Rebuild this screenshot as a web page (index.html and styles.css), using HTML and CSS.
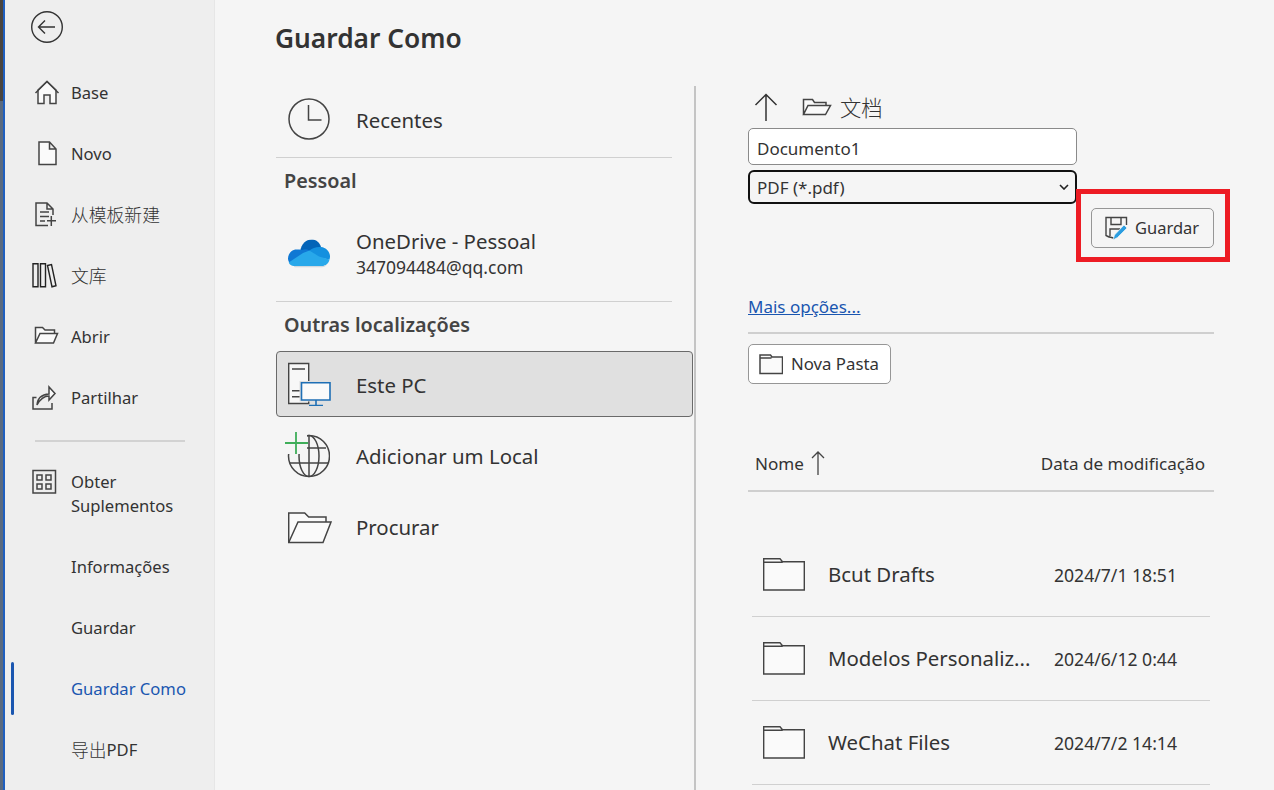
FILE: index.html
```html
<!DOCTYPE html>
<html lang="pt">
<head>
<meta charset="utf-8">
<title>Guardar Como</title>
<link rel="stylesheet" href="styles.css">
</head>
<body>
<div class="app">
  <aside class="sidebar">
    <div class="back">
      <svg width="34" height="34" viewBox="0 0 34 34" fill="none" stroke="#333" stroke-width="1.4"><circle cx="17" cy="17" r="15.3"/><path d="M8.5 17H25M15 10.5 8.5 17l6.500 6.500"/></svg>
    </div>
    <nav class="nav">
      <a class="item"><span class="ico"><svg width="30" height="26" viewBox="0 0 30 26" fill="#fafafa" stroke="#444" stroke-width="1.5"><path d="M6 23.500V10L15 1.500 24 10v13.500h-6V15h-6v8.500z"/><path d="M3.500 13 15 1.500 26.500 13" fill="none"/></svg></span>Base</a>
      <a class="item"><span class="ico"><svg width="30" height="26" viewBox="0 0 30 26" fill="#fafafa" stroke="#444" stroke-width="1.5"><path d="M7 1h10.500L24 8v15.500H7zM17.500 1v7H24"/></svg></span>Novo</a>
      <a class="item"><span class="ico"><svg width="30" height="26" viewBox="0 0 30 26" fill="none" stroke="#444" stroke-width="1.5"><path d="M16 23.500H4V1h11l6 6v6M15 1v6h6M8 10h9M8 14.500h9M8 19h5M15 18.800h9M19.300 14v10"/></svg></span><span class="cjk">从模板新建</span></a>
      <a class="item"><span class="ico"><svg width="30" height="26" viewBox="0 0 30 26" fill="none" stroke="#222" stroke-width="1.400"><path d="M1 .8h5v23H1zM8.500.8h5v23h-5zM15.500 2.500l4-1 4.500 21.300-4 1z"/></svg></span><span class="cjk">文库</span></a>
      <a class="item"><span class="ico"><svg width="30" height="26" viewBox="0 0 30 26" fill="#fafafa" stroke="#444" stroke-width="1.5"><path d="M3.500 19V3.500h7l2.500 2.500h9.500v3.500M3.500 19 8 9.500h17.500L21.500 19z"/></svg></span>Abrir</a>
      <a class="item"><span class="ico"><svg width="30" height="26" viewBox="0 0 30 26" fill="none" stroke="#444" stroke-width="1.5"><path d="M4.500 12.500H1V24h19v-6"/><path d="M5 20c.5-6 4-10.500 12-11V2l6 6.500-6 6.500v-4c-5 0-8.500 2.500-12 9z" fill="#fafafa"/></svg></span>Partilhar</a>
      <div class="rule"></div>
      <a class="item item-tall"><span class="ico"><svg width="30" height="26" viewBox="0 0 30 26" fill="none" stroke="#444" stroke-width="1.5"><path d="M1 1.500h22.500v22.500H1zM5 6h5v5H5zM14 6h5v5h-5zM5 15h5v5H5zM14 15h5v5h-5z"/></svg></span><span class="two">Obter<br>Suplementos</span></a>
      <a class="item">Informações</a>
      <a class="item">Guardar</a>
      <a class="item current">Guardar Como</a>
      <a class="item"><span class="cjk">导出</span>PDF</a>
    </nav>
  </aside>

  <main class="main">
    <h1 class="title">Guardar Como</h1>
    <div class="columns">
      <section class="places">
        <div class="place first">
          <span class="pico"><svg width="42" height="42" viewBox="0 0 42 42" fill="none" stroke="#444" stroke-width="1.500"><circle cx="21" cy="21" r="20"/><path d="M20.500 7v15h13"/></svg></span>
          <span class="pname">Recentes</span>
        </div>
        <div class="heading head1">Pessoal</div>
        <div class="place cloud">
          <span class="pico"><svg width="42" height="29" viewBox="0 0 42 29"><path d="M12 12C13.500 4 18 0 23.500 0c4.500 0 8 2.500 9.500 7.500L26 19z" fill="#0364b8"/><path d="M14 10.500c2.500-1 5-.8 7.500.5L31 18l-13 8H6C2 25 0 22 0 19c0-5 4-9 8.500-9 2 0 3.800 0 5.500.5z" fill="#0f78d4"/><path d="M33 7.500C38 8 42 12 42 17c0 1-.2 2-.5 3L30 18l-8.500-7c3-2.500 7-4 11.500-3.500z" fill="#1490df"/><path d="M21.500 11 31 17l10.500 3c-.8 4-3.800 6.500-7.500 6.500H6C3.500 26.500 1.500 25 .7 23L15 13.500z" fill="#28a8ea"/><path d="M6 26.500h28c2 0 3.800-.7 5-1.800-1 2-3 3-5 3H7c-1 0-1-.6-1-1.200z" fill="#cfd8df"/></svg></span>
          <span class="ptext"><span class="pname">OneDrive - Pessoal</span><span class="pmail">347094484@qq.com</span></span>
        </div>
        <div class="heading head2">Outras localizações</div>
        <div class="place selected">
          <span class="pico"><svg width="44" height="44" viewBox="0 0 44 44" fill="none"><path d="M.7 1.500h20v40h-20z" fill="#f7f7f7" stroke="#444" stroke-width="1.400"/><path d="M4 7h13M4 28.700h8M4 34.700h8" stroke="#444" stroke-width="1.400"/><rect x="11.500" y="19" width="31" height="20.500" fill="#dedede"/><path d="M13.500 20.700H42V38H13.500z" fill="#fafafa" stroke="#1e6fb5" stroke-width="1.600"/><path d="M28 38v5.500M21 43.500h14" stroke="#1e6fb5" stroke-width="1.600"/></svg></span>
          <span class="pname">Este PC</span>
        </div>
        <div class="place lifted">
          <span class="pico"><svg class="globe" width="46" height="54" viewBox="0 0 46 54" fill="none"><circle cx="25" cy="25" r="20.500" stroke="#444" stroke-width="1.500"/><ellipse cx="25" cy="25" rx="10" ry="20.500" stroke="#444" stroke-width="1.500"/><path d="M8 17h34M6 32h38M25 4.500v41" stroke="#444" stroke-width="1.500"/><rect x="3" y="3" width="20" height="20" fill="#f5f5f5"/><path d="M12 1v22M1 12h23" stroke="#3fae5a" stroke-width="1.800"/></svg></span>
          <span class="pname">Adicionar um Local</span>
        </div>
        <div class="place lifted">
          <span class="pico"><svg width="46" height="35" viewBox="0 0 46 35" fill="#fafafa" stroke="#444" stroke-width="1.500"><path d="M.7 31V1.500h16l4 4H38v5"/><path d="M.7 31 10 10.500h33l-8 20.500z"/></svg></span>
          <span class="pname">Procurar</span>
        </div>
      </section>

      <section class="save">
        <div class="crumb">
          <svg width="24" height="28" viewBox="0 0 24 28" fill="none" stroke="#333" stroke-width="1.500"><path d="M12 1.500V28M1.500 12 12 1.500 22.500 12"/></svg>
          <svg class="crumb-folder" width="30" height="22" viewBox="0 0 30 22" fill="#fafafa" stroke="#444" stroke-width="1.500"><path d="M1.500 18.500v-15h9l2 3H24v3M1.500 18.500 6 9.500h22.500l-5 9z"/></svg>
          <span class="cjk-path">文档</span>
        </div>
        <div class="field">Documento1</div>
        <div class="dropdown">PDF (*.pdf)<svg width="10" height="6" viewBox="0 0 10 6" fill="none" stroke="#222" stroke-width="1.600"><path d="M1 1l4 4 4-4"/></svg></div>
        <div class="save-row">
          <button class="btn btn-save">
            <svg width="26" height="26" viewBox="0 0 26 26" fill="none"><path d="M11 23.500c-2-1.500-4-1-6-2l-2-1V2.500h20.500V10M8 2.500v7h10v-7M7 21v-7h10" stroke="#444" stroke-width="1.400"/><path d="M10 25l1.500-5L21 10l3 3-9.500 9.500z" fill="#2b9de0" stroke="#f5f5f5" stroke-width=".7"/></svg>
            <span class="btn-label">Guardar</span>
          </button>
          <div class="highlight"></div>
        </div>
        <a class="more">Mais opções...</a>
        <div class="hr"></div>
        <button class="btn btn-new">
          <svg width="24" height="22" viewBox="0 0 24 22" fill="#fafafa" stroke="#444" stroke-width="1.500"><path d="M1 20.500V2h10.500l1.500 2h10.500v16.500zM1 5h11.500"/></svg>
          <span class="btn-label">Nova Pasta</span>
        </button>
        <div class="thead">
          <span class="th-name">Nome <svg width="14" height="24" viewBox="0 0 14 24" fill="none" stroke="#444" stroke-width="1.300"><path d="M7 1v23M1 7l6-6 6 6"/></svg></span>
          <span class="th-date">Data de modificação</span>
        </div>
        <div class="tbody">
          <div class="row">
            <svg width="42" height="33" viewBox="0 0 42 33" fill="#fafafa" stroke="#444" stroke-width="1.400"><path d="M.7 32V.7H17l2.500 3H41.300V32zM.7 4.200h19"/></svg>
            <span class="fname">Bcut Drafts</span><span class="fdate">2024/7/1 18:51</span>
          </div>
          <div class="row">
            <svg width="42" height="33" viewBox="0 0 42 33" fill="#fafafa" stroke="#444" stroke-width="1.400"><path d="M.7 32V.7H17l2.500 3H41.300V32zM.7 4.200h19"/></svg>
            <span class="fname">Modelos Personaliz...</span><span class="fdate">2024/6/12 0:44</span>
          </div>
          <div class="row">
            <svg width="42" height="33" viewBox="0 0 42 33" fill="#fafafa" stroke="#444" stroke-width="1.400"><path d="M.7 32V.7H17l2.500 3H41.300V32zM.7 4.200h19"/></svg>
            <span class="fname">WeChat Files</span><span class="fdate">2024/7/2 14:14</span>
          </div>
        </div>
      </section>
    </div>
  </main>
</div>
</body>
</html>
```
FILE: styles.css
```css
* { box-sizing: border-box; }
html, body { margin: 0; height: 100%; overflow: hidden; }
body { font-family: "Noto Sans", "Noto Sans CJK SC", sans-serif; color: #333; background: #f5f5f5; }
.app { display: flex; width: 1274px; height: 790px; overflow: hidden; }
.sidebar { width: 215px; flex: none; background: #eeeeee; border-left: 5px solid #1f5fc0; border-right: 1px solid #e6e6e6; position: relative; }
.sidebar::before { content: ""; position: absolute; left: -5px; top: 0; bottom: 0; width: 3px; background: linear-gradient(#4a4540 0 101px, #5a6a80 101px); }
.back { height: 63px; padding: 10px 0 0 25px; }
.back svg { display: block; }
.nav { display: flex; flex-direction: column; }
.item { height: 61px; display: flex; align-items: center; padding: 0 0 2px 66px; font-size: 16.6px; color: #333; position: relative; white-space: nowrap; }
.ico { position: absolute; left: 27px; top: 17px; width: 30px; height: 26px; }
.ico svg { display: block; }
.cjk { font-size: 17.8px; line-height: 24px; margin-top: -2px; font-family: "Noto Sans CJK SC", sans-serif; font-weight: 300; }
.rule { height: 2px; margin: 11px 29px 0 30px; background: #d2d2d2; }
.item-tall { height: 95px; align-items: flex-start; }
.item-tall .ico { top: 27px; }
.two { line-height: 24px; margin-top: 28px; }
.current { color: #1a56b0; }
.current::before { content: ""; position: absolute; left: 6px; top: 3px; width: 3px; height: 53px; border-radius: 2px; background: #1a56b0; }

.main { flex: 1; padding: 0 0 0 60px; min-width: 0; }
.title { margin: 0; height: 86px; padding-top: 19px; font-size: 26.3px; line-height: 38px; font-weight: 600; color: #333; }
.columns { display: flex; height: 704px; }
.places { width: 421px; padding-left: 1px; border-right: 2px solid #c4c4c4; flex: none; }
.place { height: 71px; display: flex; align-items: center; position: relative; padding-left: 80px; width: 417px; border-radius: 4px; }
.pico { position: absolute; left: 12px; top: 50%; transform: translateY(-50%); display: flex; }
.pname { font-size: 20.4px; color: #333; }
.first { padding-bottom: 4px; }
.first .pico { top: 33px; }
.first::after { content: ""; position: absolute; left: 0; right: 21px; bottom: -1px; height: 1px; background: #d0d0d0; }
.heading { font-size: 19.8px; font-weight: 600; color: #444; padding-left: 8px; line-height: 28px; }
.head1 { margin-top: 10px; }
.cloud { height: 107px; padding-top: 9px; }
.cloud .pico { top: 59px; }
.cloud::after { content: ""; position: absolute; left: 0; right: 21px; bottom: 0; height: 1px; background: #d0d0d0; }
.ptext { display: flex; flex-direction: column; }
.cloud .pname { line-height: 28px; }
.pmail { font-size: 17.5px; line-height: 24px; }
.head2 { margin-top: 9px; height: 40px; }
.selected { height: 66px; background: #e0e0e0; border: 1px solid #6a6a6a; margin-bottom: 5px; padding: 2px 0 0 79px; }
.selected .pico { left: 11px; }
.lifted { padding-bottom: 4px; }
.globe { margin-left: -4px; }

.save { margin-left: 52px; width: 466px; position: relative; }
.crumb { height: 42px; display: flex; align-items: center; padding-left: 6px; }
.crumb-folder { margin-left: 24px; }
.cjk-path { font-size: 21.3px; font-family: "Noto Sans CJK SC", sans-serif; font-weight: 300; margin: -2px 0 0 8px; color: #333; }
.field { width: 329px; height: 37px; background: #fff; border: 1px solid #8a8a8a; border-radius: 5px; padding-left: 8px; font-size: 17px; line-height: 39px; }
.dropdown { width: 329px; height: 34px; margin-top: 5px; border: 2px solid #111; border-radius: 6px; padding: 0 6px 0 7px; font-size: 17px; display: flex; align-items: center; justify-content: space-between; }
.save-row { display: flex; justify-content: flex-end; position: relative; margin-top: 4px; }
.btn { font-family: inherit; display: flex; align-items: center; border: 1px solid #969696; border-radius: 5px; background: #f5f5f5; color: #333; font-size: 16.5px; height: 40px; }
.btn-label { margin-top: -2px; }
.btn-save { width: 123px; padding: 0 0 0 11px; gap: 6px; }
.highlight { position: absolute; right: -16px; top: -19px; width: 154px; height: 73px; border: 5px solid #ed1c24; pointer-events: none; }
.more { display: block; margin-top: 47px; font-size: 17px; line-height: 24px; color: #1a56b0; text-decoration: underline; }
.hr { height: 2px; margin-top: 13px; background: #cfcfcf; }
.btn-new { margin-top: 10px; width: 143px; background: #fff; padding: 0 0 0 10px; gap: 8px; font-size: 16.8px; }
.thead { display: flex; justify-content: space-between; align-items: center; height: 108px; padding: 63px 9px 11px 7px; border-bottom: 2px solid #cfcfcf; font-size: 17.1px; }
.th-name { display: flex; align-items: center; gap: 7px; }
.tbody { margin-top: 41px; padding: 0 4px; }
.row { height: 84px; display: flex; align-items: center; border-bottom: 1px solid #d0d0d0; padding-left: 11px; }
.row svg { flex: none; }
.fname { font-size: 20.4px; margin: -2px 0 0 23px; flex: 1; white-space: nowrap; }
.fdate { font-size: 17.6px; margin-right: 33px; }
```
